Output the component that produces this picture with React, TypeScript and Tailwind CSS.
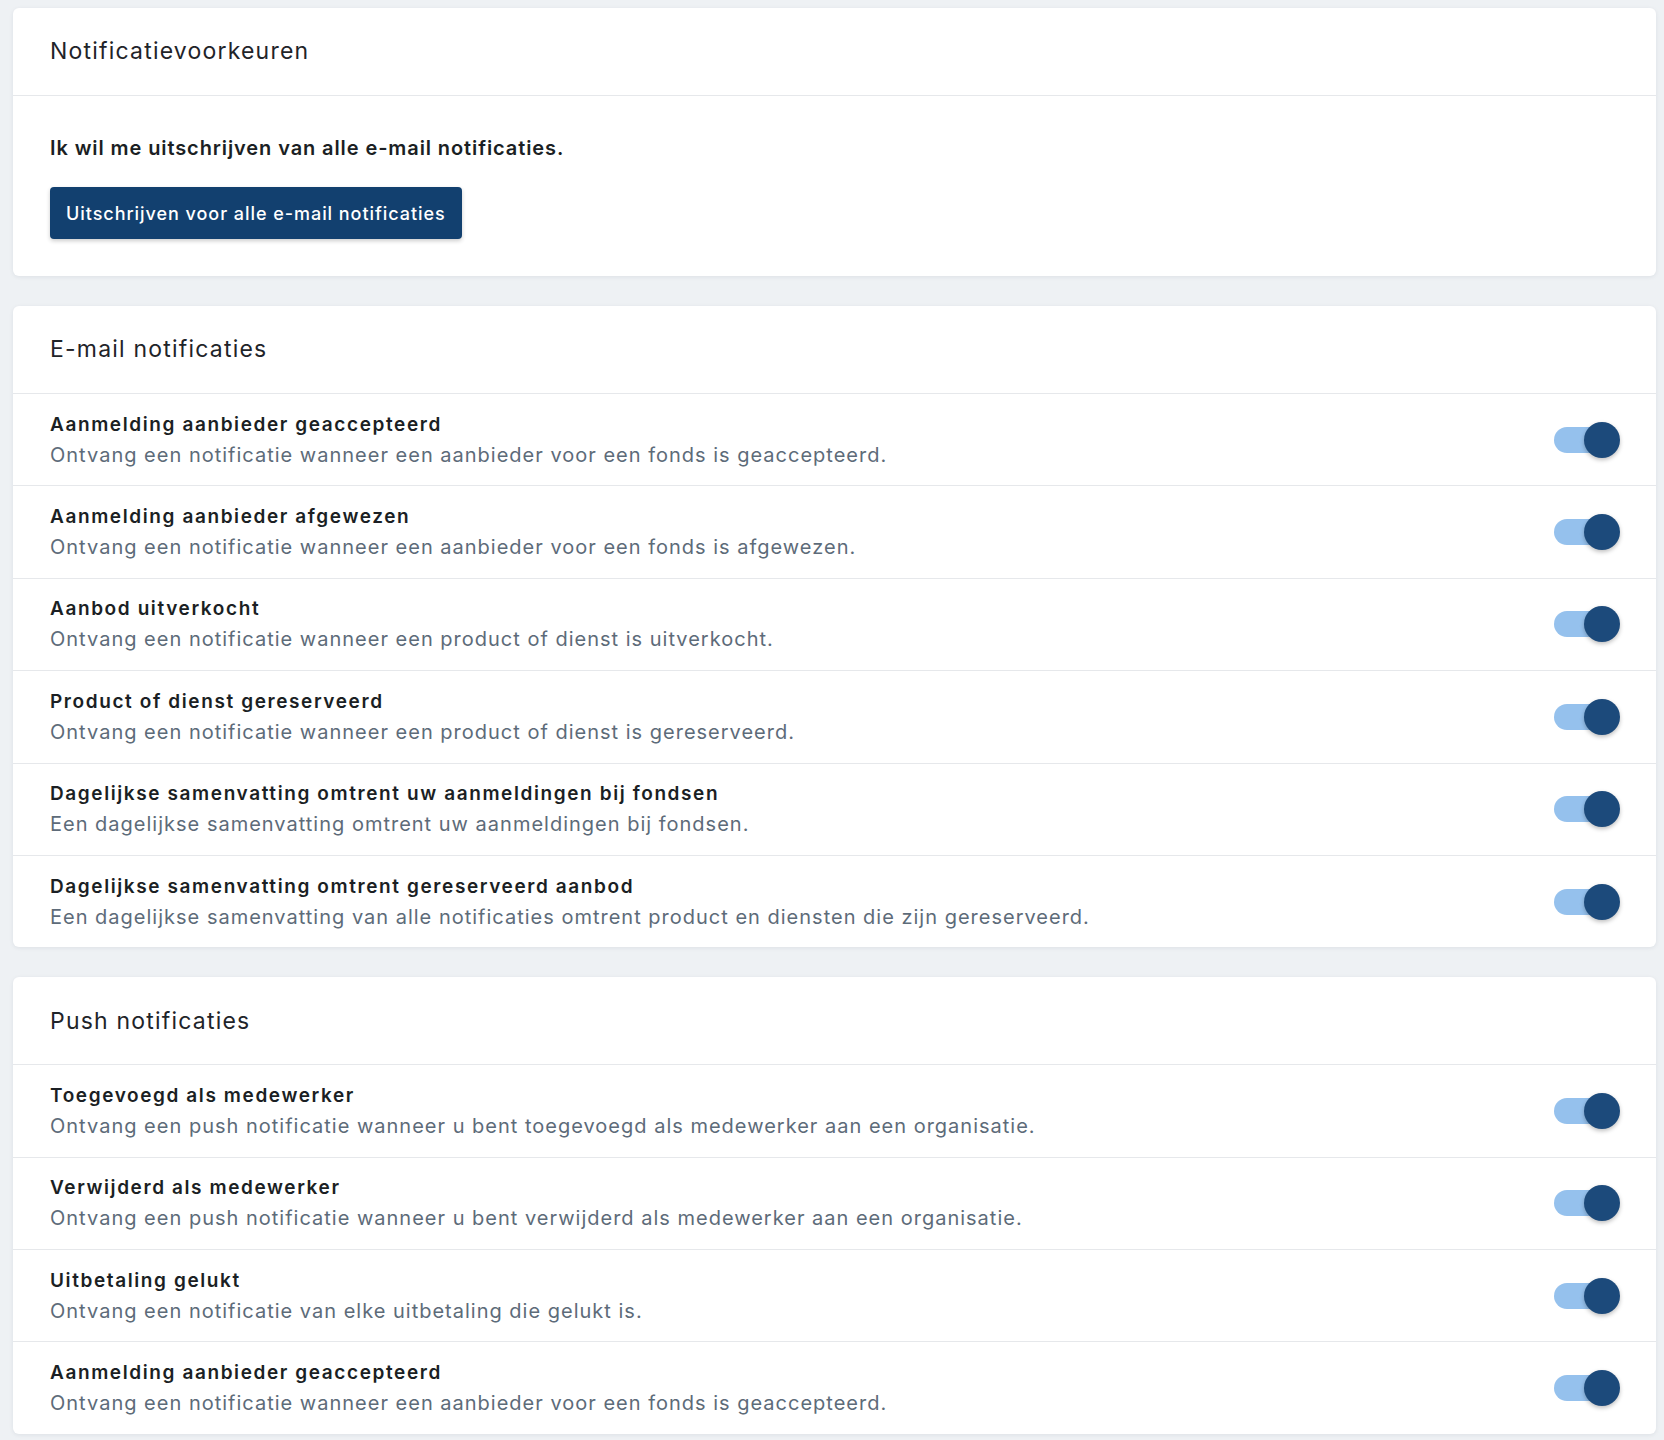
import React from 'react';

interface Pref {
  title: string;
  description: string;
}

const emailPrefs: Pref[] = [
  {
    title: 'Aanmelding aanbieder geaccepteerd',
    description: 'Ontvang een notificatie wanneer een aanbieder voor een fonds is geaccepteerd.',
  },
  {
    title: 'Aanmelding aanbieder afgewezen',
    description: 'Ontvang een notificatie wanneer een aanbieder voor een fonds is afgewezen.',
  },
  {
    title: 'Aanbod uitverkocht',
    description: 'Ontvang een notificatie wanneer een product of dienst is uitverkocht.',
  },
  {
    title: 'Product of dienst gereserveerd',
    description: 'Ontvang een notificatie wanneer een product of dienst is gereserveerd.',
  },
  {
    title: 'Dagelijkse samenvatting omtrent uw aanmeldingen bij fondsen',
    description: 'Een dagelijkse samenvatting omtrent uw aanmeldingen bij fondsen.',
  },
  {
    title: 'Dagelijkse samenvatting omtrent gereserveerd aanbod',
    description:
      'Een dagelijkse samenvatting van alle notificaties omtrent product en diensten die zijn gereserveerd.',
  },
];

const pushPrefs: Pref[] = [
  {
    title: 'Toegevoegd als medewerker',
    description: 'Ontvang een push notificatie wanneer u bent toegevoegd als medewerker aan een organisatie.',
  },
  {
    title: 'Verwijderd als medewerker',
    description: 'Ontvang een push notificatie wanneer u bent verwijderd als medewerker aan een organisatie.',
  },
  {
    title: 'Uitbetaling gelukt',
    description: 'Ontvang een notificatie van elke uitbetaling die gelukt is.',
  },
  {
    title: 'Aanmelding aanbieder geaccepteerd',
    description: 'Ontvang een notificatie wanneer een aanbieder voor een fonds is geaccepteerd.',
  },
];

function Toggle() {
  return (
    <div className="relative h-[36px] w-[66px] shrink-0">
      <div className="absolute left-0 top-[5px] h-[26px] w-[56px] rounded-full bg-[#95c1ed]" />
      <div className="absolute right-0 top-0 size-[36px] rounded-full bg-[#1c4a7b] shadow-[0_2px_4px_rgba(0,0,0,0.25)]" />
    </div>
  );
}

function CardHeader({ title }: { title: string }) {
  return (
    <div className="flex h-[88px] items-center border-b border-[#e6e8eb] px-[37px]">
      <h2 className="text-[23px] font-normal tracking-[1.2px] text-[#1f2429]">{title}</h2>
    </div>
  );
}

function PrefRow({ pref }: { pref: Pref }) {
  return (
    <div className="flex items-center justify-between border-t border-[#e6e8eb] py-[15.7px] pl-[37px] pr-[36px] first:border-t-0">
      <div>
        <div className="text-[19px] font-semibold leading-[30px] tracking-[1.6px] text-[#1b1f24]">{pref.title}</div>
        <div className="text-[20px] leading-[30px] tracking-[1px] text-[#5d6b79]">{pref.description}</div>
      </div>
      <Toggle />
    </div>
  );
}

export default function App() {
  return (
    <div
      className="min-h-screen bg-[#eef1f4] pb-[8px] pl-[13px] pr-[8px] pt-[8px]"
      style={{ fontFamily: 'Inter, "Noto Sans", sans-serif' }}
    >
      <div className="flex flex-col gap-[30px]">
        {/* Voorkeuren */}
        <section className="rounded-md bg-white shadow-[0_1px_4px_rgba(30,40,60,0.08)]">
          <CardHeader title="Notificatievoorkeuren" />
          <div className="px-[37px] pb-[37px] pt-[38px]">
            <p className="text-[20px] font-semibold leading-[28px] tracking-[0.9px] text-[#1b1f24]">
              Ik wil me uitschrijven van alle e-mail notificaties.
            </p>
            <button
              type="button"
              className="mt-[25px] h-[52px] rounded-[4px] bg-[#12406f] px-[16px] text-[18px] font-medium tracking-[0.95px] text-white shadow-[0_2px_4px_rgba(0,0,0,0.2)]"
            >
              Uitschrijven voor alle e-mail notificaties
            </button>
          </div>
        </section>

        {/* E-mail */}
        <section className="rounded-md bg-white shadow-[0_1px_4px_rgba(30,40,60,0.08)]">
          <CardHeader title="E-mail notificaties" />
          <div>
            {emailPrefs.map((pref, i) => (
              <PrefRow key={i} pref={pref} />
            ))}
          </div>
        </section>

        {/* Push */}
        <section className="rounded-md bg-white shadow-[0_1px_4px_rgba(30,40,60,0.08)]">
          <CardHeader title="Push notificaties" />
          <div>
            {pushPrefs.map((pref, i) => (
              <PrefRow key={i} pref={pref} />
            ))}
          </div>
        </section>
      </div>
    </div>
  );
}
